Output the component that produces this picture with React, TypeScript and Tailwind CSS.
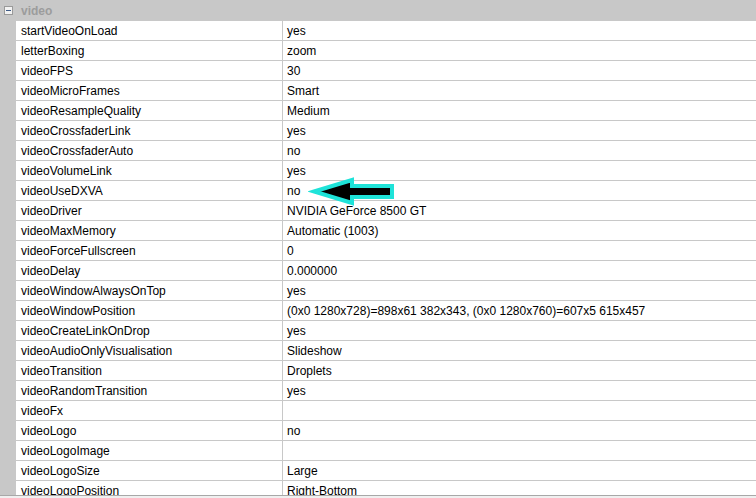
const rows: [string, string][] = [
  ["startVideoOnLoad", "yes"],
  ["letterBoxing", "zoom"],
  ["videoFPS", "30"],
  ["videoMicroFrames", "Smart"],
  ["videoResampleQuality", "Medium"],
  ["videoCrossfaderLink", "yes"],
  ["videoCrossfaderAuto", "no"],
  ["videoVolumeLink", "yes"],
  ["videoUseDXVA", "no"],
  ["videoDriver", "NVIDIA GeForce 8500 GT"],
  ["videoMaxMemory", "Automatic (1003)"],
  ["videoForceFullscreen", "0"],
  ["videoDelay", "0.000000"],
  ["videoWindowAlwaysOnTop", "yes"],
  ["videoWindowPosition", "(0x0 1280x728)=898x61 382x343, (0x0 1280x760)=607x5 615x457"],
  ["videoCreateLinkOnDrop", "yes"],
  ["videoAudioOnlyVisualisation", "Slideshow"],
  ["videoTransition", "Droplets"],
  ["videoRandomTransition", "yes"],
  ["videoFx", ""],
  ["videoLogo", "no"],
  ["videoLogoImage", ""],
  ["videoLogoSize", "Large"],
  ["videoLogoPosition", "Right-Bottom"],
];

const App = () => {
  return (
    <div
      className="relative w-[756px] h-[498px] overflow-hidden bg-white flex flex-col text-[12px] text-black"
      style={{ fontFamily: '"Liberation Sans", Arial, sans-serif' }}
    >
      {/* group header */}
      <div className="h-[21px] shrink-0 bg-[#c8c8c8] flex items-center">
        <div className="ml-[4px] w-[9px] h-[9px] border border-[#9a9a9a] bg-[#f2f2f2] flex items-center justify-center">
          <div className="w-[5px] h-[1px] bg-[#3d5a86]" />
        </div>
        <span className="ml-[8px] font-bold text-[#9c9c9c]">video</span>
      </div>

      <div className="flex-1 flex min-h-0">
        <div className="w-[16px] shrink-0 bg-[#c8c8c8]" />
        <div className="flex-1 overflow-hidden">
          {rows.map(([name, value]) => (
            <div key={name} className="h-[20px] flex border-b border-[#c8c8c8]">
              <div className="w-[267px] shrink-0 border-r border-[#c8c8c8] pl-[5px] flex items-center leading-none">
                {name}
              </div>
              <div className="flex-1 pl-[4px] flex items-center leading-none whitespace-nowrap">{value}</div>
            </div>
          ))}
        </div>
      </div>

      {/* bottom edge */}
      <div className="h-[3px] shrink-0 border-t border-[#a8a8a8] bg-[#f0f0f0]" />

      {/* annotation arrow */}
      <svg className="absolute left-[308px] top-[176px]" width="90" height="30" viewBox="0 0 90 30">
        <polygon
          points="6,15.5 44,4 44,10 84,10 84,21 44,21 44,27"
          fill="#000"
          stroke="#1ee3d9"
          strokeWidth="4"
          strokeLinejoin="miter"
        />
      </svg>
    </div>
  );
};

export default App;
